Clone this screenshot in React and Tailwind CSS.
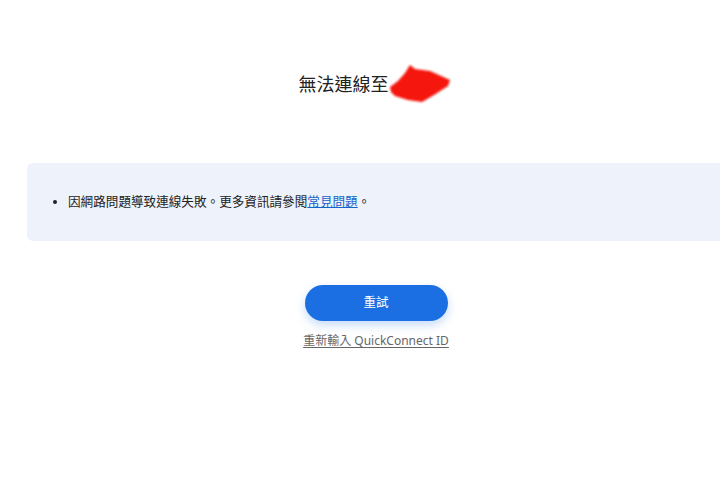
import React from "react";

const App = () => {
    return (
        <div className="w-[720px] h-[489px] overflow-hidden bg-white" style={{ fontFamily: '"Noto Sans", "Noto Sans CJK TC", sans-serif' }}>
            <div className="w-[698px] ml-[27px] flex flex-col items-center">
                <div className="h-[72px]" />
                <h1 className="flex items-center text-[18px] leading-[24px] text-[#222] font-normal h-[24px] -ml-[2px]">
                    無法連線至
                    <svg width="64" height="40" viewBox="0 0 64 40" className="-my-[8px] -ml-[1px]">
                        <defs>
                            <filter id="blur" x="-10%" y="-10%" width="120%" height="120%">
                                <feGaussianBlur stdDeviation="0.8" />
                            </filter>
                        </defs>
                        <path
                            d="M22 1 L27 5 L42 7 L62 16 L60 22 L46 31 L34 38 L20 36 L7 32 L3 28 L2 23 L10 17 L17 9 Z"
                            fill="#f5130d"
                            filter="url(#blur)"
                        />
                    </svg>
                </h1>

                <div className="w-full mt-[67px] h-[78px] bg-[#eef3fb] rounded-l-md flex items-center pl-[30px]">
                    <ul className="list-disc pl-[11px] text-[12.6px] leading-[18px] text-[#222] marker:text-[#222]">
                        <li>
                            因網路問題導致連線失敗。更多資訊請參閱<a href="#" className="text-[#1565c8] underline">常見問題</a>。
                        </li>
                    </ul>
                </div>

                <button className="mt-[44px] w-[143px] h-[36px] rounded-full bg-[#1b6fe3] text-white text-[12.5px] shadow-[0_4px_10px_rgba(27,111,227,0.25)]">
                    重試
                </button>
                <a href="#" className="mt-[11px] text-[12px] text-[#666] underline underline-offset-2">
                    重新輸入 QuickConnect ID
                </a>
            </div>
        </div>
    );
};

export default App;
